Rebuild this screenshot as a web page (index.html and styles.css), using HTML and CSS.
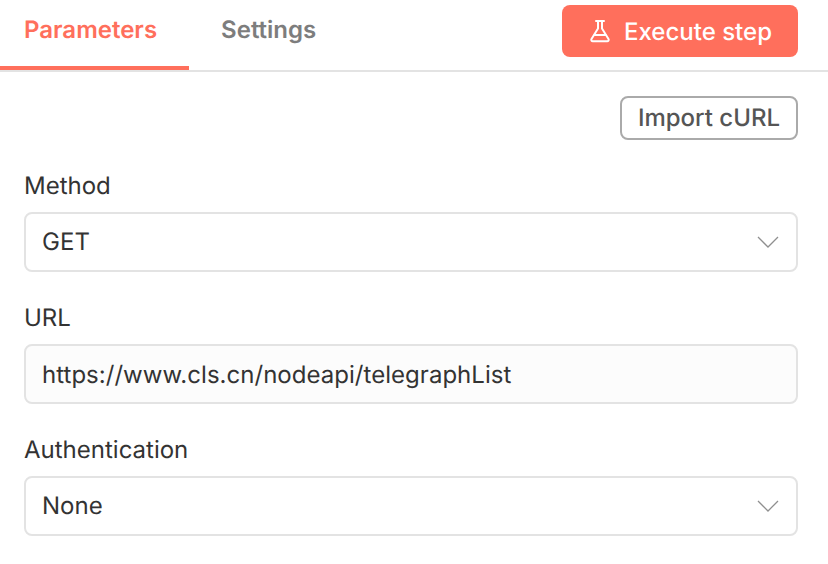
FILE: index.html
```html
<!DOCTYPE html>
<html lang="en">
<head>
    <meta charset="UTF-8">
    <meta name="viewport" content="width=device-width, initial-scale=1.0">
    <title>HTTP Request</title>
    <link rel="stylesheet" href="styles.css">
</head>
<body>
    <!-- Tabs -->
    <div class="header">
        <div class="tabs">
            <div class="tab active">Parameters</div>
            <div class="tab">Settings</div>
        </div>
        <button class="execute">
            <svg width="24" height="24" viewBox="0 0 24 24" fill="none" stroke="currentColor" stroke-width="2" stroke-linecap="round" stroke-linejoin="round">
                <path d="M8 2h8"/>
                <path d="M10 2v7.500L3.500 20a1.500 1.500 0 0 0 1.300 2.300h14.400a1.500 1.500 0 0 0 1.300-2.300L14 9.500V2"/>
                <path d="M6.500 16h11"/>
            </svg>
            <span>Execute step</span>
        </button>
    </div>

    <div class="content">
        <div class="actions">
            <button class="import">Import cURL</button>
        </div>

        <div class="field">
            <div class="label">Method</div>
            <div class="select">
                <span>GET</span>
                <svg class="chevron" width="22" height="12" viewBox="0 0 22 12" fill="none" stroke="currentColor" stroke-width="1.300">
                    <path d="M1 1l10 10L21 1"/>
                </svg>
            </div>
        </div>

        <div class="field">
            <div class="label">URL</div>
            <div class="input">https://www.cls.cn/nodeapi/telegraphList</div>
        </div>

        <div class="field">
            <div class="label">Authentication</div>
            <div class="select">
                <span>None</span>
                <svg class="chevron" width="22" height="12" viewBox="0 0 22 12" fill="none" stroke="currentColor" stroke-width="1.300">
                    <path d="M1 1l10 10L21 1"/>
                </svg>
            </div>
        </div>
    </div>
</body>
</html>
```

FILE: styles.css
```css
/* General Reset */
* {
    margin: 0;
    padding: 0;
    box-sizing: border-box;
}

body {
    font-family: 'Inter', sans-serif;
    background-color: #fff;
    color: #333;
    font-size: 24px;
    text-rendering: geometricPrecision;
}

/* Header and Tabs */
.header {
    display: flex;
    justify-content: space-between;
    height: 72px;
    padding-right: 30px;
    border-bottom: 2px solid #e3e3e3;
}

.tabs {
    display: flex;
    gap: 32px;
}

.tab {
    height: 70px;
    padding: 0 32px 0 24px;
    line-height: 60px;
    font-weight: 600;
    color: #7d7d7d;
}

.tab + .tab {
    padding-left: 0;
}

.tab.active {
    color: #ff6f5c;
    border-bottom: 4px solid #ff6f5c;
}

/* Buttons */
button {
    font-family: inherit;
    text-rendering: inherit;
    cursor: pointer;
}

.execute {
    display: flex;
    align-items: center;
    justify-content: center;
    gap: 12px;
    width: 236px;
    height: 52px;
    margin-top: 5px;
    font-size: 24px;
    font-weight: 500;
    color: #fff;
    background-color: #ff6f5c;
    border: none;
    border-radius: 8px;
}

.content {
    padding: 24px 30px 0 24px;
}

.actions {
    display: flex;
    justify-content: flex-end;
}

.import {
    width: 178px;
    height: 44px;
    padding-bottom: 2px;
    font-size: 24px;
    font-weight: 500;
    color: #555;
    background-color: #fff;
    border: 2px solid #aaa;
    border-radius: 8px;
}

/* Form Fields */
.field {
    margin-top: 32px;
}

.label {
    height: 28px;
    line-height: 28px;
    margin-bottom: 12px;
}

.select,
.input {
    display: flex;
    align-items: center;
    justify-content: space-between;
    height: 60px;
    padding: 0 17px 0 16px;
    border: 2px solid #e3e3e3;
    border-radius: 8px;
    letter-spacing: 0.03px;
}

.select {
    padding-bottom: 2px;
    background-color: #fff;
}

.input {
    background-color: #fcfcfc;
}

.chevron {
    margin-top: 2px;
    color: #8f8f8f;
}
```
